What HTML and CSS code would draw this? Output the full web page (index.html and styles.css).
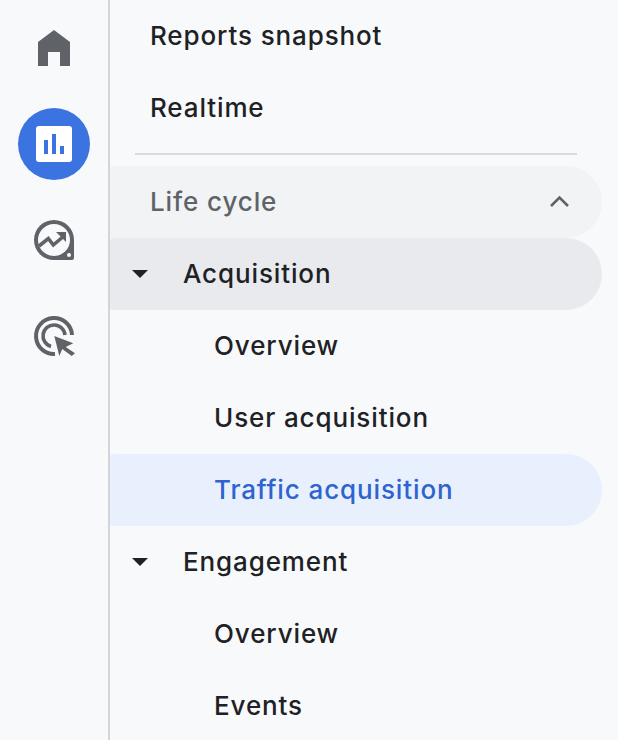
FILE: index.html
```html
<!DOCTYPE html>
<html lang="en">
<head>
<meta charset="utf-8">
<title>Reports navigation</title>
<link rel="stylesheet" href="styles.css">
</head>
<body>
<div class="app">
  <nav class="rail">
    <a class="rail-btn">
      <svg class="ico" width="72" height="72" viewBox="0 0 72 72"><path fill="#5f6368" d="M20 30 L36 18 L52 30 V54 H42 V40 H30 V54 H20 Z"/></svg>
    </a>
    <a class="rail-btn rail-active">
      <svg class="ico" width="72" height="72" viewBox="0 0 72 72"><rect x="18" y="18" width="36" height="36" rx="3" fill="#fff"/><path fill="#3b73e0" d="M26 32h4v14h-4zM34 26h4v20h-4zM42 38h4v8h-4z"/></svg>
    </a>
    <a class="rail-btn">
      <svg class="ico" width="72" height="72" viewBox="0 0 72 72">
        <path fill="#5f6368" fill-rule="evenodd" d="M36 16a20 20 0 0 1 20 20v18a2 2 0 0 1-2 2H36a20 20 0 0 1 0-40zM36 20a16 16 0 1 0 0 32a16 16 0 0 0 0-32zM51 49a2 2 0 1 0 0 4a2 2 0 0 0 0-4z"/>
        <path fill="none" stroke="#5f6368" stroke-width="3.6" d="M21 42l9.300-7.500 5 6.500 10-8.500"/>
        <path fill="#5f6368" d="M38 28h10v10z"/>
      </svg>
    </a>
    <a class="rail-btn">
      <svg class="ico" width="72" height="72" viewBox="0 0 72 72">
        <path fill="none" stroke="#5f6368" stroke-width="4" d="M37 54A18 18 0 1 1 54 35"/>
        <path fill="none" stroke="#5f6368" stroke-width="3.6" d="M33 46.500A11 11 0 1 1 47 35"/>
        <path fill="#5f6368" d="M36.300 36l19 7.300-7.600 3.700 9.300 6.300-3.300 2.700-9.400-7-3 7z"/>
      </svg>
    </a>
  </nav>
  <div class="nav">
    <div class="row lvl0">Reports snapshot</div>
    <div class="row lvl0">Realtime</div>
    <div class="divider-wrap"><div class="divider"></div></div>
    <div class="row lvl0 section">
      <span class="grow">Life cycle</span>
      <svg class="chev" width="24" height="14" viewBox="0 0 24 14"><path fill="none" stroke="#5f6368" stroke-width="2.600" d="M3 12l8.500-8.500L20 12"/></svg>
    </div>
    <div class="row lvl1 open"><span class="caret"></span>Acquisition</div>
    <div class="row lvl2">Overview</div>
    <div class="row lvl2">User acquisition</div>
    <div class="row lvl2 current">Traffic acquisition</div>
    <div class="row lvl1"><span class="caret"></span>Engagement</div>
    <div class="row lvl2">Overview</div>
    <div class="row lvl2">Events</div>
  </div>
</div>
</body>
</html>
```
FILE: styles.css
```css
* { box-sizing: border-box; }
html, body { margin: 0; height: 100%; }
body {
  background: #f8f9fb;
  font-family: Inter, Roboto, sans-serif;
  overflow: hidden;
}
.app { display: flex; height: 740px; }
.rail {
  width: 110px;
  flex: none;
  border-right: 2px solid #d3d5d8;
  display: flex;
  flex-direction: column;
  align-items: center;
  padding-top: 12px;
  gap: 24px;
}
.rail-btn { width: 72px; height: 72px; display: block; border-radius: 50%; }
.rail-active { background: #3b73e0; }
.ico { display: block; }
.nav { flex: 1; min-width: 0; padding-right: 16px; }
.row {
  height: 72px;
  display: flex;
  align-items: center;
  padding-bottom: 2px;
  font-size: 26px;
  font-weight: 500;
  letter-spacing: 0.88px;
  color: #202124;
  border-radius: 3px 36px 36px 3px;
}
.lvl0 { padding-left: 40px; }
.lvl1 { padding-left: 22px; }
.lvl2 { padding-left: 104px; }
.section { background: #f1f3f5; color: #5f6368; padding-right: 30px; }
.grow { flex: 1; }
.chev { display: block; }
.open { background: #e8eaed; }
.current { background: #e8f0fd; color: #2f63cf; }
.caret {
  flex: none;
  width: 16px;
  height: 8px;
  margin-top: 2px;
  margin-right: 35px;
  background: #202124;
  clip-path: polygon(0 0, 100% 0, 50% 100%);
}
.divider-wrap { height: 22px; padding: 9px 25px 0 25px; }
.divider { height: 2px; background: #d9dbde; }
```
